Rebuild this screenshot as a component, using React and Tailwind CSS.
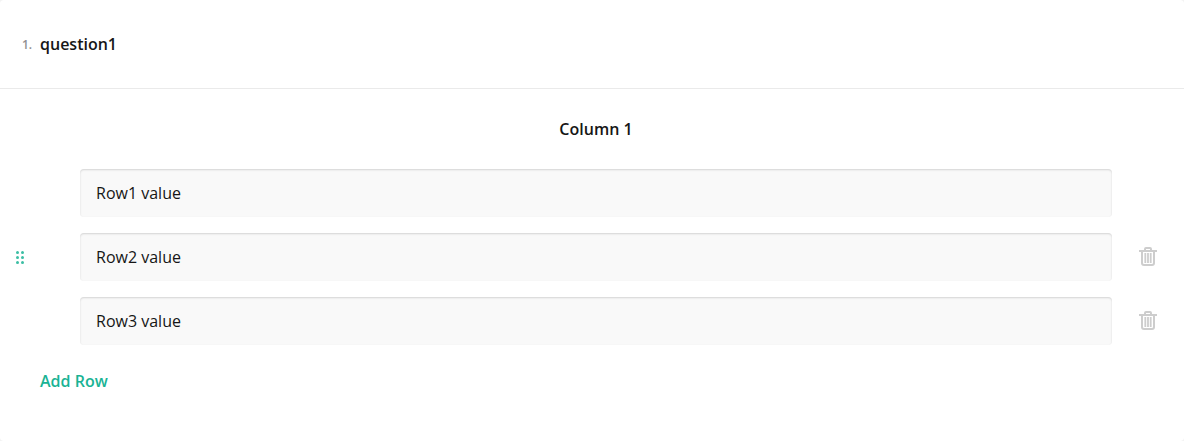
function Trash() {
  return (
    <svg className="-mt-0.5" width="18" height="20" viewBox="0 0 18 20" fill="none" stroke="#cdcdcd">
      <path strokeWidth="2" d="M0 5H18M6 4V3Q6 2 7 2H11Q12 2 12 3V4M3 5V17Q3 19 5 19H13Q15 19 15 17V5" />
      <path strokeWidth="1.8" d="M6.3 7V17M9 7V17M11.7 7V17" />
    </svg>
  );
}

function Row({ value, dragging, removable }) {
  return (
    <div className="flex h-16 items-center">
      <div className="flex w-20 pl-4">
        {dragging && (
          <svg width="8" height="14" viewBox="0 0 8 14" fill="#19b394" fillOpacity="0.85">
            {[2.5, 7.5, 12.5].map((y) => (
              <g key={y}>
                <circle cx="1.5" cy={y} r="1.5" />
                <circle cx="6.5" cy={y} r="1.5" />
              </g>
            ))}
          </svg>
        )}
      </div>
      <div className="flex h-12 flex-1 items-center rounded bg-[#f9f9f9] px-4 shadow-[inset_0px_1px_2px_0px_rgba(0,0,0,0.15)]">
        {value}
      </div>
      <div className="flex w-[72px] justify-center">{removable && <Trash />}</div>
    </div>
  );
}

export default function App() {
  return (
    <div className="h-[441px] overflow-hidden bg-[#f3f3f3]">
      <div className="h-full rounded bg-white font-['Open_Sans',sans-serif] text-base leading-6 text-[#161616]">
        <div className="flex h-[89px] items-center border-b border-[#eaeaea] pl-[22px] font-semibold">
          <span className="w-[18px] pt-0.5 text-xs text-[#909090]">1.</span>
          <h5>question1</h5>
        </div>
        <div className="pt-7">
          <div className="mb-5 pr-[72px] pl-20 text-center font-semibold">Column 1</div>
          <Row value="Row1 value" />
          <Row value="Row2 value" dragging removable />
          <Row value="Row3 value" removable />
        </div>
        <button className="mt-4 ml-10 font-semibold text-[#19b394]">Add Row</button>
      </div>
    </div>
  );
}
